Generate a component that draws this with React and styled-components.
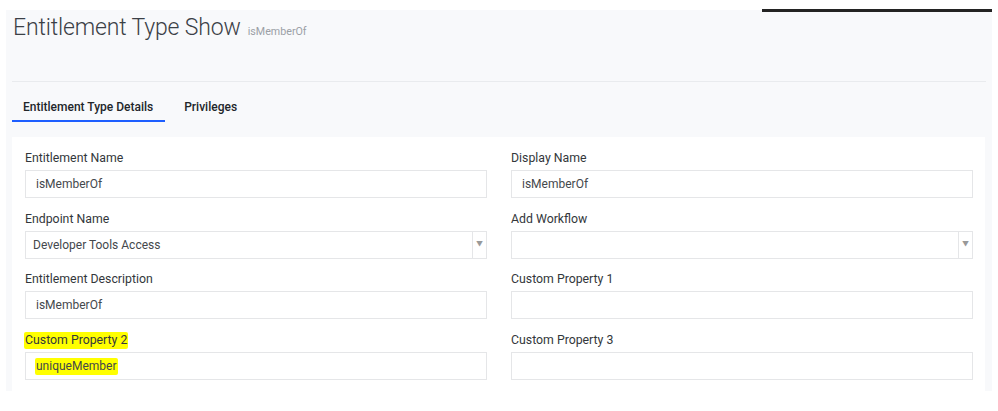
import React from "react";
import styled, { createGlobalStyle } from "styled-components";

const Global = createGlobalStyle`
  html, body { margin: 0; padding: 0; background: #ffffff; }
  body { font-family: "Roboto", "Inter", sans-serif; color: #333; }
  * { box-sizing: border-box; }
`;

const Page = styled.div`
  position: relative;
  width: 998px;
  height: 411px;
  padding: 10px 6px 0 6px;
`;

const TopBar = styled.div`
  position: absolute;
  top: 9px;
  left: 762px;
  width: 230px;
  height: 3px;
  background: #232323;
`;

const Panel = styled.div`
  width: 986px;
  height: 381px;
  background: #f8f9fb;
  padding: 0 6px 0 6px;
  display: flex;
  flex-direction: column;
  overflow: hidden;
`;

const Header = styled.div`
  height: 72px;
  flex-shrink: 0;
  padding: 3px 0 0 1px;
  display: flex;
  align-items: baseline;
  gap: 7px;
  border-bottom: 1px solid #e9ebee;
`;

const Title = styled.h1`
  margin: 0;
  font-family: "Roboto", sans-serif;
  font-weight: 300;
  font-size: 23px;
  line-height: 30px;
  letter-spacing: -0.15px;
  color: #3b4046;
`;

const Sub = styled.span`
  font-size: 10.7px;
  color: #9ba0a6;
`;

const Tabs = styled.div`
  display: flex;
  gap: 8px;
  margin-top: 14px;
  flex-shrink: 0;
`;

const Tab = styled.div`
  padding: 4px 12px 6px 11px;
  font-size: 12px;
  line-height: 14px;
  font-weight: 500;
  color: #22262a;
  border-bottom: 2px solid ${(p) => (p.$active ? "#1e5eff" : "transparent")};
`;

const Card = styled.div`
  margin-top: 15px;
  margin-right: 1px;
  flex: 1;
  background: #ffffff;
  padding: 11px 12px 0 13px;
  display: grid;
  grid-template-columns: 462px 462px;
  column-gap: 24px;
  align-content: start;
`;

const Field = styled.div`
  display: flex;
  flex-direction: column;
  gap: 3px;
  margin-bottom: 10.7px;
`;

const Label = styled.div`
  font-size: 12.3px;
  line-height: 17px;
  padding-top: 2px;
  color: #33373b;
`;

const Mark = styled.span`
  background: #ffff00;
  padding: 1px 1px 2px 1px;
  margin-left: -1px;
  border-radius: 2px;
`;

const Input = styled.div`
  height: 28px;
  border: 1px solid #e5e6e8;
  background: #fff;
  display: flex;
  align-items: center;
  padding-left: 10px;
  font-size: 12px;
  color: #44484c;
`;

const Select = styled.div`
  height: 28px;
  border: 1px solid #e5e6e8;
  background: #fff;
  display: flex;
  align-items: stretch;
  font-size: 12px;
  color: #44484c;
`;

const SelectValue = styled.div`
  flex: 1;
  display: flex;
  align-items: center;
  padding-left: 7px;
`;

const Caret = styled.div`
  width: 14px;
  border-left: 1px solid #e5e6e8;
  display: flex;
  align-items: center;
  justify-content: center;
  color: #999;
  font-size: 7px;
`;

const fields = [
  { label: "Entitlement Name", value: "isMemberOf" },
  { label: "Display Name", value: "isMemberOf" },
  { label: "Endpoint Name", value: "Developer Tools Access", select: true },
  { label: "Add Workflow", value: "", select: true },
  { label: "Entitlement Description", value: "isMemberOf" },
  { label: "Custom Property 1", value: "" },
  { label: "Custom Property 2", value: "uniqueMember", mark: true },
  { label: "Custom Property 3", value: "" },
];

export default function App() {
  return (
    <>
      <Global />
      <Page>
        <TopBar />
        <Panel>
          <Header>
            <Title>Entitlement Type Show</Title>
            <Sub>isMemberOf</Sub>
          </Header>
          <Tabs>
            <Tab $active>Entitlement Type Details</Tab>
            <Tab>Privileges</Tab>
          </Tabs>
          <Card>
            {fields.map((f) => (
              <Field key={f.label}>
                <Label>{f.mark ? <Mark>{f.label}</Mark> : f.label}</Label>
                {f.select ? (
                  <Select>
                    <SelectValue>{f.value}</SelectValue>
                    <Caret>▼</Caret>
                  </Select>
                ) : (
                  <Input>{f.mark ? <Mark>{f.value}</Mark> : f.value}</Input>
                )}
              </Field>
            ))}
          </Card>
        </Panel>
      </Page>
    </>
  );
}
